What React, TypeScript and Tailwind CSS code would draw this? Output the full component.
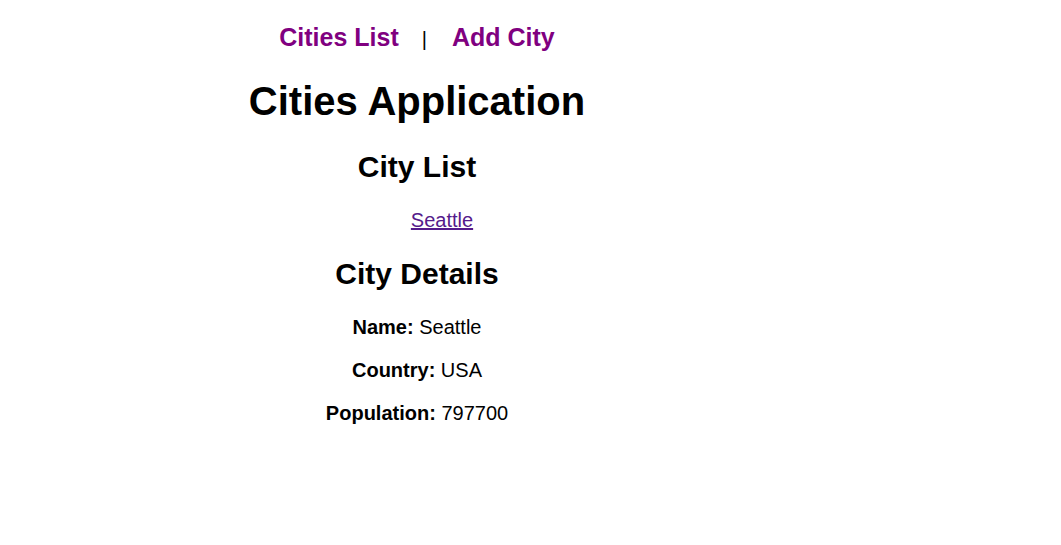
export default function App() {
  return (
    <div
      className="w-[834px] text-center text-[20px] leading-[normal] text-black bg-white"
      style={{ fontFamily: '"Liberation Sans", Arial, sans-serif' }}
    >
      <nav className="pt-[23px] text-[25px] leading-[normal]">
        <a href="#" className="font-bold text-[#800080] no-underline">Cities List</a>
        <span className="ml-[23px] mr-[25px] text-[20px] text-black">|</span>
        <a href="#" className="font-bold text-[#800080] no-underline">Add City</a>
      </nav>
      <h1 className="text-[40px] font-bold leading-[normal] mt-[27px] mb-[26px]">Cities Application</h1>
      <h2 className="text-[30px] font-bold leading-[normal] my-[25px]">City List</h2>
      <ul className="list-none pl-[50px] my-[20px]">
        <li>
          <a href="#" className="text-[#551A8B] underline">Seattle</a>
        </li>
      </ul>
      <h2 className="text-[30px] font-bold leading-[normal] my-[25px]">City Details</h2>
      <p className="my-[20px]"><b>Name:</b> Seattle</p>
      <p className="my-[20px]"><b>Country:</b> USA</p>
      <p className="my-[20px]"><b>Population:</b> 797700</p>
    </div>
  );
}
